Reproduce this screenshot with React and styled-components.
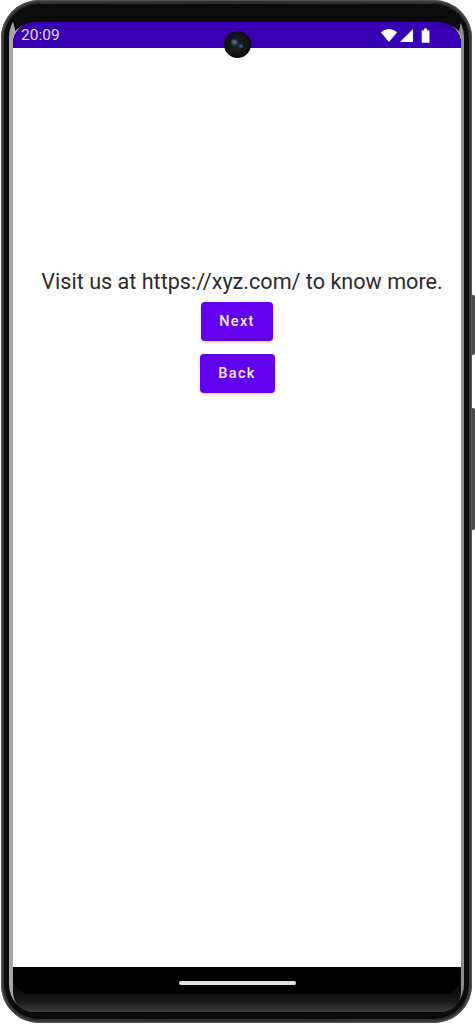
import React from "react";
import styled, { createGlobalStyle } from "styled-components";

const Global = createGlobalStyle`
  html, body { margin: 0; padding: 0; background: #fff; }
  body { font-family: Roboto, "Liberation Sans", sans-serif; }
  * { box-sizing: border-box; }
`;

const Page = styled.div`
  width: 475px;
  height: 1024px;
  padding-left: 1px;
  overflow: hidden;
  background: #fff;
`;

const Phone = styled.div`
  position: relative;
  width: 471px;
  height: 1023px;
  padding: 3px;
  border-radius: 38px;
  background: linear-gradient(to right, #3a3a3a, #2c2c2c 50%, #3a3a3a);
  box-shadow: inset 0 0 0 1px #555;
`;

const SideKey = styled.div`
  position: absolute;
  left: 100%;
  top: ${(p) => p.$top}px;
  width: 3px;
  height: ${(p) => p.$height}px;
  border-radius: 0 2px 2px 0;
  background: #4a4a4a;
`;

const Bezel = styled.div`
  display: flex;
  height: 100%;
  padding: 3px 5px 8px;
  border-radius: 35px;
  background: #0b0b0b;
  box-shadow: inset 0 1px 0 #2b2b2b, inset 0 -1px 0 #2f2f2f;
`;

const Edge = styled.div`
  flex: 1;
  display: flex;
  min-width: 0;
  border-style: solid;
  border-width: 16px 3px 0 4px;
  border-color: #0b0b0b #8c8c8c transparent #a6a6a6;
  border-radius: 31px 31px 27px 27px;
  background: linear-gradient(to bottom, #a6a6a6, #a6a6a6);
`;

const Glass = styled.div`
  flex: 1;
  display: flex;
  min-width: 0;
  padding-bottom: 18px;
  border-radius: 22px 22px 20px 20px;
  background: linear-gradient(to bottom, #0d0d0d 970px, #1c1c1c 980px, #3c3c3c);
`;

const Screen = styled.div`
  position: relative;
  flex: 1;
  display: flex;
  flex-direction: column;
  min-width: 0;
  overflow: hidden;
  border-radius: 22px 22px 18px 18px;
  background: #000;
`;

const StatusBar = styled.div`
  display: flex;
  flex: none;
  align-items: center;
  justify-content: space-between;
  height: 26px;
  padding: 0 31px 0 8px;
  background: #3700b3;
  color: #e4dcf4;
  font-size: 15.5px;
`;

const StatusIcons = styled.div`
  display: flex;
  align-items: center;
`;

const Camera = styled.div`
  position: absolute;
  top: 9px;
  left: 50%;
  width: 27px;
  height: 27px;
  margin-left: -13.5px;
  border-radius: 50%;
  background:
    radial-gradient(circle at 63% 56%, #1f5f73 0 1px, transparent 2.5px),
    radial-gradient(circle at 38% 42%, #5a6a78 0 1px, transparent 4px),
    radial-gradient(circle at 50% 50%, #23262c, #0a0a0c 75%);
`;

const Content = styled.main`
  flex: 1;
  display: flex;
  flex-direction: column;
  align-items: center;
  padding-top: 220px;
  background: #fff;
  box-shadow: 0 1px 0 #888;
`;

const Message = styled.p`
  flex: none;
  margin: 0 0 6px;
  padding-left: 10px;
  color: #2b2b2b;
  font-size: 21.6px;
  line-height: 28px;
  white-space: nowrap;
`;

const ActionButton = styled.button`
  display: block;
  width: ${(p) => p.$width}px;
  height: 39px;
  margin-bottom: 13px;
  padding: 0;
  border: 0;
  border-radius: 4px;
  background: #6200ee;
  color: #f3ecfd;
  font-family: Roboto, "Liberation Sans", sans-serif;
  font-size: 14.5px;
  font-weight: 500;
  letter-spacing: 1.35px;
  box-shadow: 0 1px 3px rgba(0, 0, 0, 0.22);
`;

const NavBar = styled.div`
  display: flex;
  flex: none;
  align-items: flex-start;
  justify-content: center;
  height: 27px;
  padding-top: 14px;
  background: #000;
`;

const HomeBar = styled.div`
  width: 117px;
  height: 4px;
  border-radius: 2px;
  background: #e4e4e4;
`;

export default function App() {
  return (
    <Page>
      <Global />
      <Phone>
        <SideKey $top={295} $height={60} />
        <SideKey $top={408} $height={122} />
        <Bezel>
          <Edge>
            <Glass>
              <Screen>
                <StatusBar>
                  <span>20:09</span>
                  <StatusIcons>
                    <svg width="49" height="16" viewBox="0 0 49 16" fill="#fff">
                      <path d="M0 5.6C2 3.4 4.9 2 8 2s6 1.4 8 3.6L8 15z" />
                      <path d="M19 15 32 2v13z" />
                      <path d="M42.5 3.2h1.6V1.5h3v1.7h1.6a.8.8 0 0 1 .8.8v11a.8.8 0 0 1-.8.8h-6.2a.8.8 0 0 1-.8-.8V4a.8.8 0 0 1 .8-.8z" transform="translate(-1)" />
                    </svg>
                  </StatusIcons>
                </StatusBar>
                <Camera />
                <Content>
                  <Message>Visit us at https://xyz.com/ to know more.</Message>
                  <ActionButton $width={72}>Next</ActionButton>
                  <ActionButton $width={75}>Back</ActionButton>
                </Content>
                <NavBar>
                  <HomeBar />
                </NavBar>
              </Screen>
            </Glass>
          </Edge>
        </Bezel>
      </Phone>
    </Page>
  );
}
